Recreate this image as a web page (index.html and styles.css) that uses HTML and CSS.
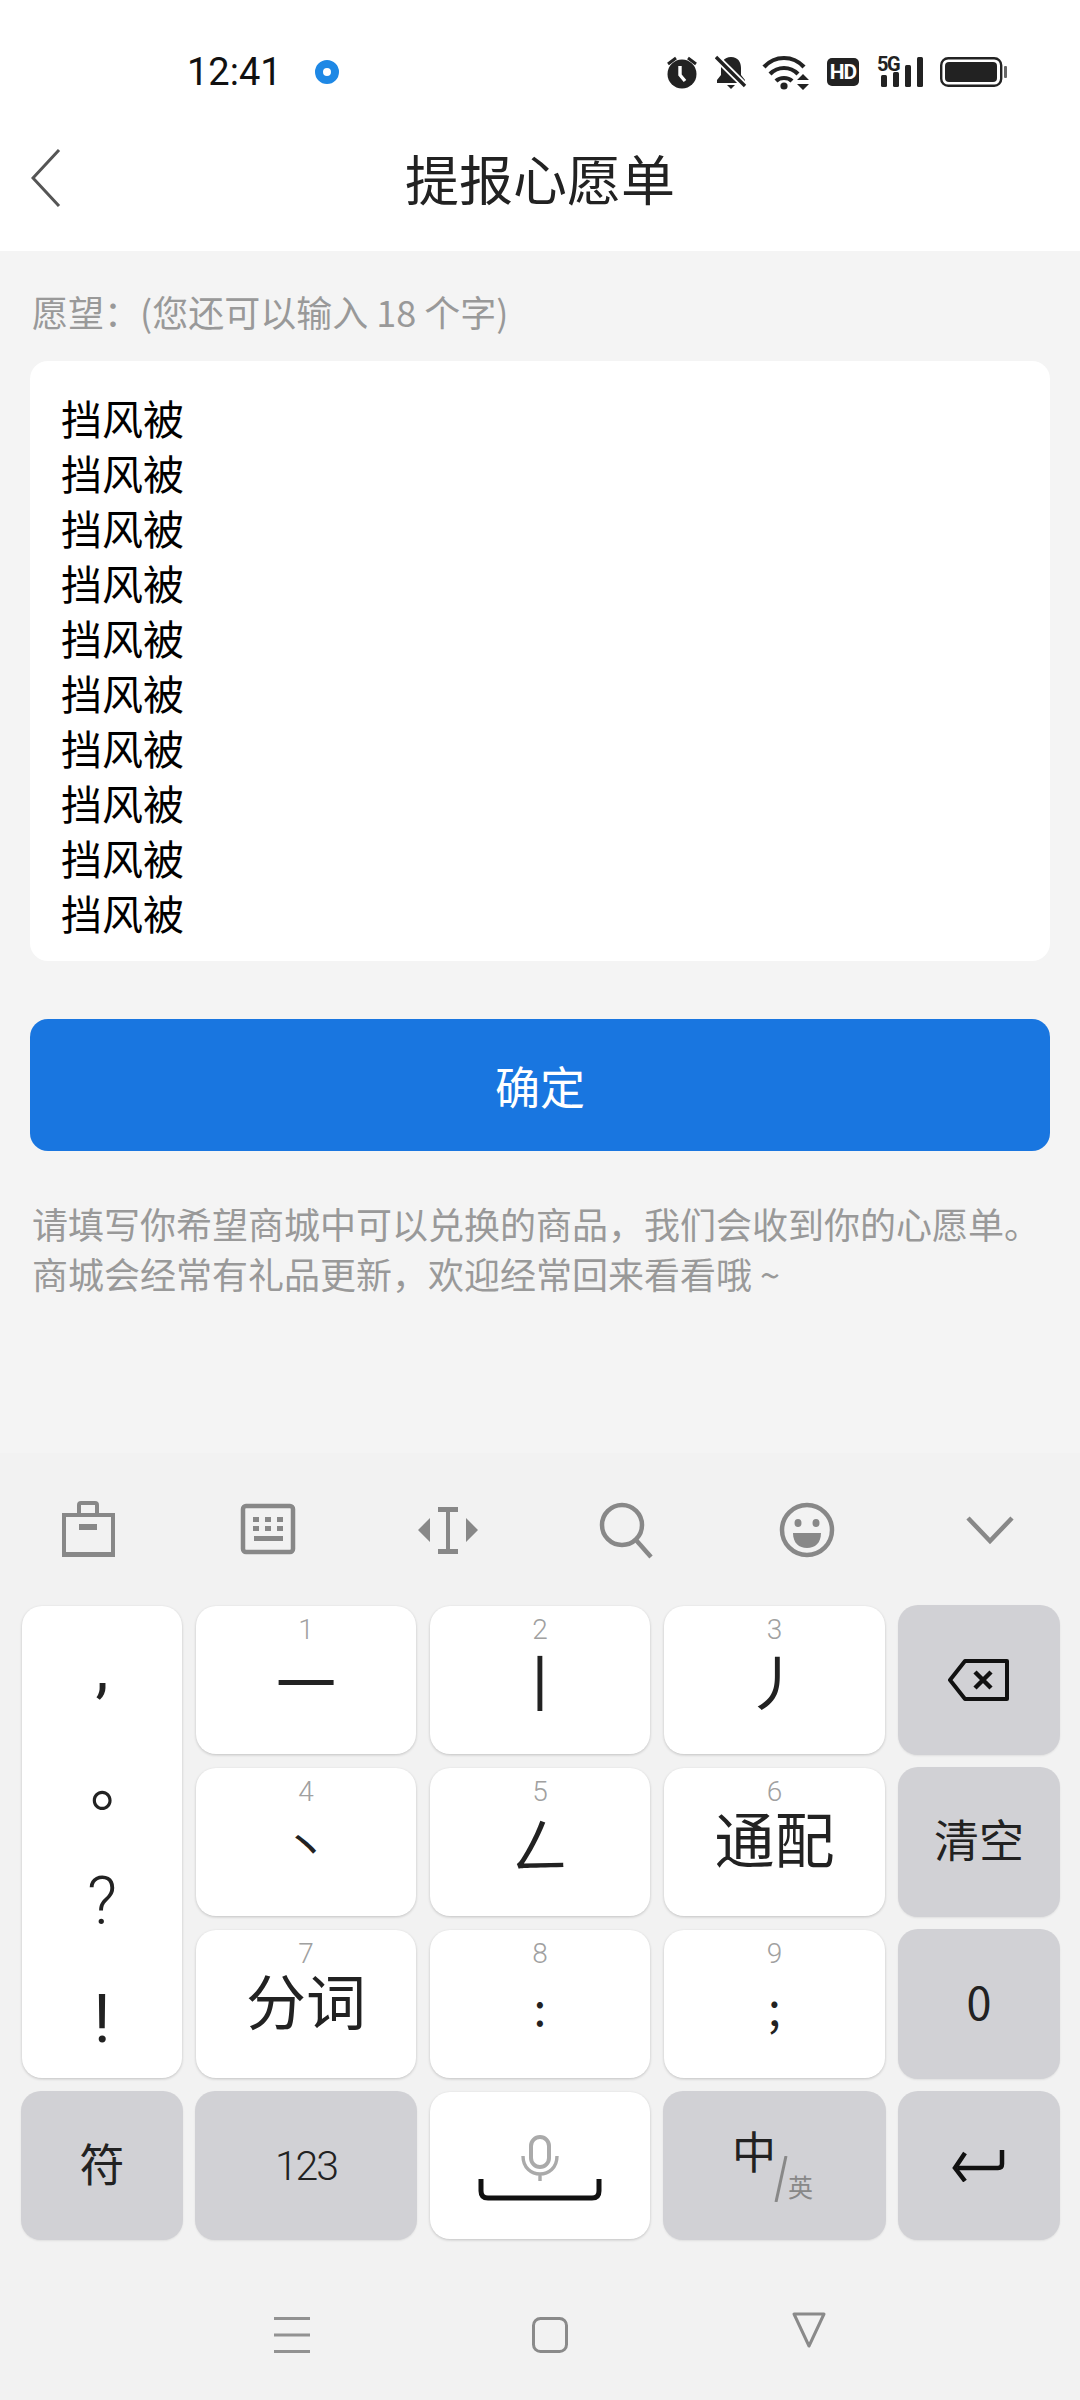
FILE: index.html
```html
<!DOCTYPE html>
<html lang="zh-CN">

<head>
    <meta charset="UTF-8">
    <meta name="viewport" content="width=device-width, initial-scale=1.0">
    <title>提报心愿单</title>
    <link rel="stylesheet" href="styles.css">
</head>

<body>
    <header class="topBar">
        <div class="statusBar">
            <span class="clock">12:41</span>
            <span class="notifyDot"></span>
            <div class="statusIcons">
                <svg width="32" height="34" viewBox="0 0 32 34">
                    <circle cx="16" cy="19" r="14.5" fill="#222" />
                    <path d="M2 9l8-6M30 9l-8-6" stroke="#222" stroke-width="3" fill="none" />
                    <path d="M14 11v9l5 6" stroke="#fff" stroke-width="3.4" fill="none" />
                </svg>
                <svg width="32" height="34" viewBox="0 0 32 34">
                    <path d="M16 2c7 0 10 5 10 11v7l4 5v3H2v-3l4-5v-7C6 7 9 2 16 2z" fill="#222" />
                    <path d="M12 30h8l-4 4z" fill="#222" />
                    <path d="M0 1l31 31" stroke="#fff" stroke-width="7" />
                    <path d="M1 2l29 29" stroke="#222" stroke-width="3.4" />
                </svg>
                <svg class="wifiIcon" width="48" height="35" viewBox="0 0 48 35">
                    <path d="M2 12c11-12 29-12 40 0M8 19c8-8 20-8 28 0M14 26c4-4 12-4 16 0" stroke="#222"
                        stroke-width="4.2" fill="none" />
                    <circle cx="22" cy="31" r="3.6" fill="#222" />
                    <path d="M35 25l6-6 6 6zM35 29l6 6 6-6z" fill="#222" />
                </svg>
                <span class="hdBadge">HD</span>
                <div class="signal">
                    <span class="fiveG">5G</span>
                    <svg width="46" height="30" viewBox="0 0 46 30">
                        <rect x="4" y="18" width="6" height="12" rx="1.5" fill="#222" />
                        <rect x="16" y="15" width="6" height="15" rx="1.5" fill="#222" />
                        <rect x="28" y="8" width="6" height="22" rx="1.5" fill="#222" />
                        <rect x="40" y="0" width="6" height="30" rx="1.5" fill="#222" />
                    </svg>
                </div>
                <svg width="67" height="30" viewBox="0 0 67 30">
                    <rect x="1.2" y="1.2" width="60" height="27.6" rx="7" fill="none" stroke="#222" stroke-width="2.4" />
                    <rect x="5" y="5" width="52" height="20" rx="4" fill="#222" />
                    <rect x="64" y="9" width="3" height="12" rx="1" fill="#666" />
                </svg>
            </div>
        </div>
        <div class="titleRow">
            <svg class="backIcon" width="30" height="58" viewBox="0 0 30 58">
                <path d="M28 1L2 29l26 28" stroke="#555" stroke-width="3" fill="none" />
            </svg>
            <h1>提报心愿单</h1>
        </div>
    </header>

    <main class="content">
        <p class="hintLabel">愿望&#xFF1A;(您还可以输入 18 个字)</p>
        <div class="wishBox">
            <div>挡风被</div>
            <div>挡风被</div>
            <div>挡风被</div>
            <div>挡风被</div>
            <div>挡风被</div>
            <div>挡风被</div>
            <div>挡风被</div>
            <div>挡风被</div>
            <div>挡风被</div>
            <div>挡风被</div>
        </div>
        <button class="okBtn">确定</button>
        <p class="noteText">请填写你希望商城中可以兑换的商品&#xFF0C;我们会收到你的心愿单&#x3002;<br>商城会经常有礼品更新&#xFF0C;欢迎经常回来看看哦 ~</p>
    </main>

    <div class="imePanel">
        <div class="imeTools">
            <svg width="64" height="60" viewBox="0 0 64 60">
                <path d="M8 15h49v39H8z" fill="none" stroke="#888" stroke-width="4" />
                <path d="M6 52h53v5H6z" fill="#888" />
                <path d="M23 14V5q0-2 2-2h14q2 0 2 2v9" fill="none" stroke="#888" stroke-width="4" />
                <rect x="23" y="24" width="18" height="6" fill="#888" />
            </svg>
            <svg width="64" height="60" viewBox="0 0 64 60">
                <rect x="7" y="6" width="50" height="46" rx="3" fill="none" stroke="#888" stroke-width="4.5" />
                <path
                    d="M17 17h6v5h-6zM29 17h6v5h-6zM41 17h6v5h-6zM17 26h6v5h-6zM29 26h6v5h-6zM41 26h6v5h-6zM18 36h29v5H18z"
                    fill="#888" />
            </svg>
            <svg width="64" height="60" viewBox="0 0 64 60">
                <path d="M22 7h20v5H22zM22 49h20v5H22zM30 10h4v40h-4z" fill="#888" />
                <path d="M14 18v24L2 30zM50 18v24l12-12z" fill="#888" />
            </svg>
            <svg width="64" height="60" viewBox="0 0 64 60">
                <circle cx="26" cy="25" r="20" fill="none" stroke="#888" stroke-width="4.5" />
                <path d="M40 40l15 17" stroke="#888" stroke-width="4.5" />
            </svg>
            <svg width="64" height="60" viewBox="0 0 64 60">
                <circle cx="31" cy="30" r="25" fill="none" stroke="#888" stroke-width="4.5" />
                <ellipse cx="22" cy="23" rx="3.5" ry="4" fill="#888" />
                <ellipse cx="40" cy="23" rx="3.5" ry="4" fill="#888" />
                <path d="M17 33h28c0 10-6 15-14 15s-14-5-14-15z" fill="#888" />
            </svg>
            <svg width="64" height="60" viewBox="0 0 64 60">
                <path d="M12 18l22 23 22-23" stroke="#888" stroke-width="4.5" fill="none" />
            </svg>
        </div>

        <div class="keyboard">
            <div class="key puncKey">
                <span class="puncComma">,</span>
                <span class="puncStop">&#x3002;</span>
                <span class="puncAsk">?</span>
                <span>!</span>
            </div>
            <div class="key"><span class="keyNum">1</span><span class="keyMain">一</span></div>
            <div class="key"><span class="keyNum">2</span><span class="keyMain">丨</span></div>
            <div class="key"><span class="keyNum">3</span><span class="keyMain">丿</span></div>
            <div class="key grayKey">
                <svg width="62" height="42" viewBox="0 0 62 42">
                    <path d="M17 2h42v38H17L2 21z" fill="none" stroke="#111" stroke-width="4" stroke-linejoin="round" />
                    <path d="M27 13l16 16M43 13L27 29" stroke="#111" stroke-width="4.5" />
                </svg>
            </div>

            <div class="key"><span class="keyNum">4</span><span class="keyMain keyDot">丶</span></div>
            <div class="key"><span class="keyNum">5</span><span class="keyMain">ㄥ</span></div>
            <div class="key"><span class="keyNum">6</span><span class="keyMain keyWords">通配</span></div>
            <div class="key grayKey"><span class="grayLabel">清空</span></div>

            <div class="key"><span class="keyNum">7</span><span class="keyMain keyWords">分词</span></div>
            <div class="key"><span class="keyNum">8</span><span class="keyMain keyPunc">:</span></div>
            <div class="key"><span class="keyNum">9</span><span class="keyMain keyPunc">;</span></div>
            <div class="key grayKey"><span class="grayLabel">0</span></div>

            <div class="key grayKey"><span class="grayLabel">符</span></div>
            <div class="key grayKey"><span class="numLabel">123</span></div>
            <div class="key spaceKey">
                <svg width="124" height="66" viewBox="0 0 124 66">
                    <rect x="53" y="2" width="18" height="30" rx="9" fill="none" stroke="#aaa" stroke-width="4" />
                    <path d="M45 21c0 24 34 24 34 0M62 38v8" fill="none" stroke="#aaa" stroke-width="3.4" />
                    <path d="M3 44v12q0 7 7 7h104q7 0 7-7V44" fill="none" stroke="#111" stroke-width="5" />
                </svg>
            </div>
            <div class="key grayKey langKey">
                <span class="langZh">中</span>
                <svg class="langSlash" width="14" height="46" viewBox="0 0 14 46">
                    <path d="M12 0L2 46" stroke="#888" stroke-width="3" />
                </svg>
                <span class="langEn">英</span>
            </div>
            <div class="key grayKey">
                <svg width="54" height="32" viewBox="0 0 54 32">
                    <path d="M50 0v14q0 4-4 4H6" fill="none" stroke="#111" stroke-width="4.5" />
                    <path d="M13 3L3 18l10 13" fill="none" stroke="#111" stroke-width="4.5" />
                </svg>
            </div>
        </div>
    </div>

    <nav class="navBar">
        <svg width="36" height="36" viewBox="0 0 36 36">
            <path d="M0 1.5h36M0 18h36M0 34.5h36" stroke="#929292" stroke-width="3" />
        </svg>
        <svg width="36" height="36" viewBox="0 0 36 36">
            <rect x="1.5" y="1.5" width="33" height="33" rx="7" fill="none" stroke="#8a8a8a" stroke-width="3" />
        </svg>
        <svg class="navBack" width="36" height="36" viewBox="0 0 36 36">
            <path d="M3 2h30L18 34z" fill="none" stroke="#8a8a8a" stroke-width="3" stroke-linejoin="round" />
        </svg>
    </nav>
</body>

</html>
```

FILE: styles.css
```css
/* Reset some default styles */
body,
h1,
p {
    margin: 0;
    padding: 0;
}

body {
    width: 1080px;
    height: 2400px;
    overflow: hidden;
    background-color: #f2f2f2;
    font-family: "Noto Sans CJK SC", sans-serif;
    color: #222;
}

.topBar {
    background-color: #fff;
    height: 251px;
}

.statusBar {
    height: 104px;
    padding: 40px 73px 0 187px;
    box-sizing: border-box;
    display: flex;
    align-items: center;
}

.clock {
    font-family: Roboto, sans-serif;
    font-size: 38px;
    color: #111;
    width: 128px;
}

.notifyDot {
    width: 8px;
    height: 8px;
    border: 8px solid #1e88e5;
    border-radius: 50%;
}

.statusIcons {
    margin-left: auto;
    display: flex;
    align-items: center;
    gap: 17px;
}

.wifiIcon {
    margin-left: -2px;
}

.hdBadge {
    width: 32px;
    height: 28px;
    line-height: 28px;
    background-color: #222;
    border-radius: 5px;
    color: #fff;
    font-family: Roboto, sans-serif;
    font-size: 21px;
    font-weight: 700;
    letter-spacing: -1px;
    text-align: center;
}

.signal {
    position: relative;
    margin-left: 1px;
}

.signal svg {
    display: block;
}

.fiveG {
    position: absolute;
    left: 0;
    top: -3px;
    font-family: Roboto, sans-serif;
    font-size: 20px;
    line-height: 20px;
    font-weight: 700;
    letter-spacing: -1.5px;
    color: #222;
}

.titleRow {
    height: 147px;
    display: flex;
    align-items: center;
    justify-content: center;
    position: relative;
}

.backIcon {
    position: absolute;
    left: 31px;
    top: 45px;
}

h1 {
    font-size: 54px;
    font-weight: 400;
    color: #222;
}

.content {
    padding: 0 30px;
    height: 1202px;
    background-color: #f4f4f4;
    box-sizing: border-box;
}

.hintLabel {
    padding: 35px 0 0 2px;
    font-size: 36px;
    line-height: 50px;
    color: #999;
    margin-bottom: 25px;
    white-space: nowrap;
}

.wishBox {
    background-color: #fff;
    border-radius: 18px;
    height: 600px;
    box-sizing: border-box;
    padding: 29px 31px;
    font-size: 41px;
    line-height: 55px;
    color: #000;
}

.okBtn {
    display: block;
    width: 100%;
    height: 132px;
    margin-top: 58px;
    background-color: #1976e0;
    border: none;
    border-radius: 18px;
    color: #fff;
    font-family: inherit;
    font-size: 45px;
}

.noteText {
    margin-top: 47px;
    padding-left: 2px;
    font-size: 36px;
    line-height: 50px;
    color: #999;
    white-space: nowrap;
}

.imePanel {
    padding-top: 47px;
}

.imeTools {
    display: flex;
    gap: 116px;
    padding-left: 56px;
    height: 60px;
}

.keyboard {
    margin-top: 46px;
    padding-left: 22px;
    display: grid;
    grid-template-columns: 160px 220px 220px 221px 160px;
    grid-template-rows: 148px 148px 148px 147px;
    column-gap: 14px;
    row-gap: 14px;
}

.key {
    position: relative;
    display: flex;
    align-items: center;
    justify-content: center;
    background-color: #fff;
    border-radius: 20px;
    box-shadow: 0 1px 3px rgba(0, 0, 0, 0.2);
}

.grayKey {
    background-color: #d1d1d5;
    box-shadow: 0 1px 2px rgba(0, 0, 0, 0.08);
    margin: -1px;
}

.puncKey {
    grid-row: span 3;
    display: grid;
    grid-template-rows: repeat(4, 1fr);
    justify-items: center;
    align-items: center;
    font-family: Roboto, sans-serif;
    font-size: 66px;
    color: #222;
}

.puncComma {
    margin-top: 4px;
}

.puncStop {
    font-family: "Noto Sans CJK TC", sans-serif;
    font-size: 62px;
    margin-top: 28px;
}

.puncAsk {
    font-weight: 300;
}

.keyNum {
    position: absolute;
    top: 10px;
    left: 50%;
    transform: translateX(-50%);
    font-family: Roboto, sans-serif;
    font-size: 28px;
    font-weight: 300;
    line-height: 28px;
    color: #a0a0a0;
}

.keyMain {
    font-size: 60px;
    line-height: 60px;
    color: #222;
}

.keyWords {
    margin-top: -10px;
}

.keyDot {
    font-size: 46px;
    line-height: 46px;
    margin-top: 2px;
}

.keyPunc {
    font-size: 46px;
    line-height: 46px;
    margin-top: 4px;
}

.grayLabel {
    font-size: 45px;
    line-height: 60px;
    margin-top: -6px;
    color: #222;
}

.numLabel {
    font-family: Roboto, sans-serif;
    font-size: 41px;
    font-weight: 300;
    letter-spacing: -2px;
    color: #222;
}

.spaceKey {
    padding-top: 4px;
}

.langKey {
    align-items: flex-start;
}

.langZh {
    font-size: 44px;
    line-height: 50px;
    margin-top: 34px;
    margin-left: -4px;
    color: #222;
}

.langSlash {
    margin-top: 65px;
    margin-left: -2px;
}

.langEn {
    font-size: 25px;
    line-height: 30px;
    margin-top: 80px;
    color: #888;
}

.navBar {
    margin-top: 78px;
    display: flex;
    padding-left: 274px;
    gap: 222px;
}

.navBack {
    margin-top: -5px;
    margin-left: 1px;
}
```
